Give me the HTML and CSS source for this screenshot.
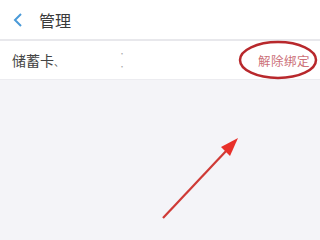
FILE: index.html
```html
<!doctype html>
<html lang="zh">
<head>
	<meta charset="UTF-8">
	<title>管理</title>
	<link rel="stylesheet" href="styles.css">
</head>
<body>
	<div id="frame">
		<div class="topbar">
			<svg class="back" width="10" height="16" viewBox="0 0 10 16">
				<path d="M8 2 L2 8 L8 14" fill="none" stroke="#4a9ad8" stroke-width="2"/>
			</svg>
			<span class="title">管理</span>
		</div>
		<div class="card">
			<span class="cardname">储蓄卡<span class="mark">、</span></span>
			<div class="masked">
				<span>˙</span>
				<span>˙</span>
			</div>
			<span class="unbind">解除绑定</span>
		</div>
		<div class="content"></div>
		<svg class="notes" width="320" height="240" viewBox="0 0 320 240">
			<ellipse cx="278" cy="60" rx="38" ry="18" fill="none" stroke="#b8282c" stroke-width="2.5"/>
			<line x1="163" y1="218" x2="227" y2="150" stroke="#cf3a36" stroke-width="2.2"/>
			<polygon points="238,138 221,147 230,156" fill="#e8302a"/>
		</svg>
	</div>
</body>
</html>
```

FILE: styles.css
```css
body {
	margin:0;
	background:#f4f4f8;
	font-family:"Noto Sans CJK SC", "Noto Sans", sans-serif;
}

#frame {
	position:relative;
	width:320px;
	height:240px;
	overflow:hidden;
}

.topbar {
	height:39px;
	background:#fff;
	border-bottom:2px solid #e8e8ec;
	display:flex;
	align-items:center;
	padding-left:13px;
}

.back {
	margin-right:16px;
}

.title {
	font-size:16px;
	color:#3a3a3a;
}

.card {
	height:38px;
	background:#fff;
	border-bottom:1px solid #ececf0;
	display:flex;
	align-items:center;
	padding-left:12px;
	padding-right:10px;
}

.cardname {
	font-size:14px;
	color:#444;
	width:108px;
}

.mark {
	font-size:10px;
	color:#555;
}

.masked {
	flex:1;
	display:flex;
	flex-direction:column;
	gap:2px;
	font-size:8px;
	line-height:11px;
	color:#aaa;
}

.unbind {
	font-size:12.5px;
	color:#cc7078;
	letter-spacing:0.5px;
}

.content {
	height:160px;
}

.notes {
	position:absolute;
	left:0;
	top:0;
}
```
